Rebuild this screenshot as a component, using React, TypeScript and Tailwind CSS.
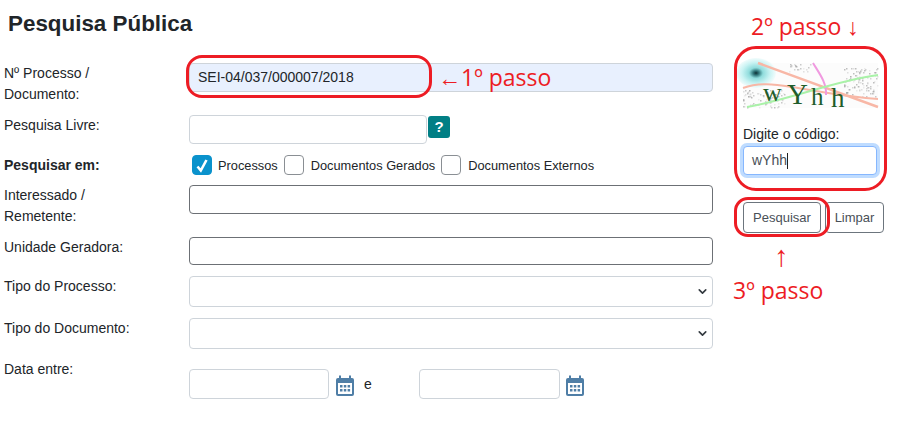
import { ChevronDown } from 'lucide-react';

const Label = ({ children, bold }: { children: React.ReactNode; bold?: boolean }) => (
  <div className={`w-[185px] shrink-0 text-[14px] leading-[21px] text-[#212529] ${bold ? 'font-bold' : ''}`}>
    {children}
  </div>
);

const Select = () => (
  <div className="w-[524px] h-full border border-[#ced4da] rounded-[4px] bg-white flex items-center justify-end pr-[3px]">
    <ChevronDown size={13} strokeWidth={3} className="text-[#343a40]" />
  </div>
);

const CheckItem = ({ label, checked }: { label: string; checked?: boolean }) => (
  <div className={`flex items-center ${checked ? 'gap-[6px]' : 'gap-[7px]'}`}>
    <div className={`w-[20px] h-[20px] rounded-[4px] border flex items-center justify-center ${checked ? 'bg-[#0a92cc] border-[#0a92cc]' : 'bg-white border-[#8a8f94]'}`}>
      {checked && (
        <svg width="14" height="15" viewBox="0 0 14 15">
          <path d="M2.5 8.5 L5.8 12.5 L11.5 2" stroke="#fff" strokeWidth="2.6" fill="none" />
        </svg>
      )}
    </div>
    <span className="pt-[1px] text-[12.8px] text-[#212529]">{label}</span>
  </div>
);

const CalendarIcon = () => (
  <svg width="18" height="22" viewBox="0 0 18 22" className="shrink-0">
    <rect x="0" y="3" width="18" height="18" rx="2" fill="#4f7ea6" />
    <rect x="3" y="0.5" width="2" height="4" fill="#4f7ea6" />
    <rect x="13" y="0.5" width="2" height="4" fill="#4f7ea6" />
    <rect x="2" y="8" width="14" height="11" fill="#fff" />
    {[4, 7.8, 11.6].map((x) =>
      [10, 14].map((y) => <rect key={`${x}-${y}`} x={x} y={y} width="2.5" height="2.5" fill="#4f7ea6" />),
    )}
  </svg>
);

// ruido do captcha: manchas cinza claras com pontos pseudoaleatorios
const noise: { x: number; y: number; o: number }[] = [];
for (let i = 0; i < 700; i++) {
  const x = (i * 73 + (i * i) % 41) % 135;
  const y = (i * 37 + (i * i * 3) % 29) % 45;
  const left = x < 42 && y > 26;
  const right = x > 100 && y > 4 && y < 34;
  const top = x > 45 && x < 68 && y < 10;
  if (left || right || top) noise.push({ x, y, o: 0.15 + ((i * 7) % 5) / 10 });
}

const Captcha = () => (
  <svg width="135" height="45" viewBox="0 0 135 45" className="block overflow-visible">
    <defs>
      <radialGradient id="blob">
        <stop offset="0" stopColor="#0e2f33" />
        <stop offset="0.14" stopColor="#2f7478" />
        <stop offset="0.35" stopColor="#8fdcdc" />
        <stop offset="0.7" stopColor="#c9f3f3" />
        <stop offset="1" stopColor="#f2fcfc" />
      </radialGradient>
    </defs>
    <rect width="135" height="45" fill="#fcfcfc" />
    <ellipse cx="13" cy="10" rx="20" ry="15" fill="url(#blob)" />
    {noise.map((p, i) => (
      <rect key={i} x={p.x} y={p.y} width="1.5" height="1.5" fill="#8a8a8a" opacity={p.o} />
    ))}
    <path d="M0 25 C30 14 60 30 135 36" stroke="#f8b7a6" strokeWidth="2" fill="none" />
    <path d="M15 0 L135 44" stroke="#f8b7a6" strokeWidth="2.5" fill="none" />
    <path d="M70 0 C76 10 84 20 83 32" stroke="#f09ae0" strokeWidth="2" fill="none" />
    <path d="M4 44 C50 36 90 18 135 12" stroke="#a9f2a8" strokeWidth="2" fill="none" />
    <text fontFamily="'Liberation Serif', serif" fill="#1f5c2a">
      <tspan x="20" y="38" fontSize="26">w</tspan>
      <tspan x="44" y="41" fontSize="29">Y</tspan>
      <tspan x="68" y="42" fontSize="25">h</tspan>
      <tspan x="88" y="43.5" fontSize="27">h</tspan>
    </text>
  </svg>
);

export default function App() {
  return (
    <div className="relative w-[909px] h-[432px] bg-white overflow-hidden font-['Liberation_Sans',sans-serif]">
      <div className="flex">
        {/* Formulario */}
        <div className="w-[713px] pl-[4px] shrink-0">
          <h1 className="pl-[4px] pt-[11px] h-[63px] text-[22.4px] leading-[26px] font-bold text-[#212529]">Pesquisa Pública</h1>

          <div className="flex h-[52px]">
            <Label>Nº Processo /<br />Documento:</Label>
            <div className="w-[524px] h-[29px] bg-[#e8f0fe] border border-[#ced4da] rounded-[4px] pl-[8px] flex items-center text-[14px] text-[#212529]">
              SEI-04/037/000007/2018
            </div>
          </div>

          <div className="flex h-[40px]">
            <Label>Pesquisa Livre:</Label>
            <div className="w-[238px] h-[29px] border border-[#ced4da] rounded-[4px] bg-white" />
            <div className="ml-[1px] mt-[1px] w-[22px] h-[22px] rounded-[3px] bg-[#017f85] text-white text-[15px] font-bold flex items-center justify-center">?</div>
          </div>

          <div className="flex h-[30px]">
            <Label bold>Pesquisar em:</Label>
            <div className="flex gap-[6px] pl-[3px] h-[20px] items-center">
              <CheckItem label="Processos" checked />
              <CheckItem label="Documentos Gerados" />
              <CheckItem label="Documentos Externos" />
            </div>
          </div>

          <div className="flex h-[52px]">
            <Label>Interessado /<br />Remetente:</Label>
            <div className="w-[524px] h-[29px] border border-[#6c7075] rounded-[4px]" />
          </div>

          <div className="flex h-[39px]">
            <Label>Unidade Geradora:</Label>
            <div className="w-[524px] h-[28px] border border-[#6c7075] rounded-[4px]" />
          </div>

          <div className="flex h-[42px]">
            <Label>Tipo do Processo:</Label>
            <div className="h-[31px]"><Select /></div>
          </div>

          <div className="flex h-[41px]">
            <Label>Tipo do Documento:</Label>
            <div className="h-[31px]"><Select /></div>
          </div>

          <div className="flex">
            <Label>Data entre:</Label>
            <div className="flex items-center h-[30px] mt-[10px]">
              <div className="w-[140px] h-[30px] border border-[#ced4da] rounded-[4px]" />
              <div className="ml-[7px] mt-[3px]"><CalendarIcon /></div>
              <span className="ml-[10px] w-[55px] text-[14px] text-[#212529]">e</span>
              <div className="w-[141px] h-[30px] border border-[#ced4da] rounded-[4px]" />
              <div className="ml-[6px] mt-[3px]"><CalendarIcon /></div>
            </div>
          </div>
        </div>

        {/* Captcha */}
        <div className="ml-[30px] pt-[63px] w-[141px]">
          <Captcha />
          <div className="mt-[18px] text-[14px] leading-[17px] text-[#212529]">Digite o código:</div>
          <div className="mt-[3px] w-[134px] h-[29px] border border-[#86b7fe] rounded-[4px] shadow-[0_0_0_3px_#bfdcff] bg-white pl-[8px] flex items-center text-[14px] text-[#495057]">
            wYhh<span className="w-px h-[16px] bg-[#222]" />
          </div>
          <div className="flex mt-[27px] gap-[4px]">
            <div className="w-[78px] h-[31px] border border-[#6c757d] rounded-[4px] flex items-center justify-center text-[13px] text-[#495057]">Pesquisar</div>
            <div className="w-[59px] h-[31px] border border-[#6c757d] rounded-[4px] flex items-center justify-center text-[13px] text-[#495057]">Limpar</div>
          </div>
        </div>
      </div>

      {/* Anotacoes */}
      <div className="absolute left-[186px] top-[55px] w-[246px] h-[43px] border-[3px] border-[#ed1c24] rounded-[16px]" />
      <div className="absolute left-[734px] top-[46px] w-[153px] h-[145px] border-[3px] border-[#ed1c24] rounded-[22px]" />
      <div className="absolute left-[734px] top-[197px] w-[96px] h-[40px] border-[3px] border-[#ed1c24] rounded-[14px]" />
      <div className="absolute left-[438px] top-[62px] text-[23px] leading-[30px] text-[#ed1c24] font-['Open_Sans',sans-serif]">←1º passo</div>
      <div className="absolute left-[751px] top-[11px] text-[23px] leading-[30px] text-[#ed1c24] font-['Open_Sans',sans-serif]">2º passo ↓</div>
      <div className="absolute left-[774px] top-[240px] text-[29px] leading-[30px] text-[#ed1c24] font-['Open_Sans',sans-serif]">↑</div>
      <div className="absolute left-[733px] top-[275px] text-[23px] leading-[30px] text-[#ed1c24] font-['Open_Sans',sans-serif]">3º passo</div>
    </div>
  );
}
